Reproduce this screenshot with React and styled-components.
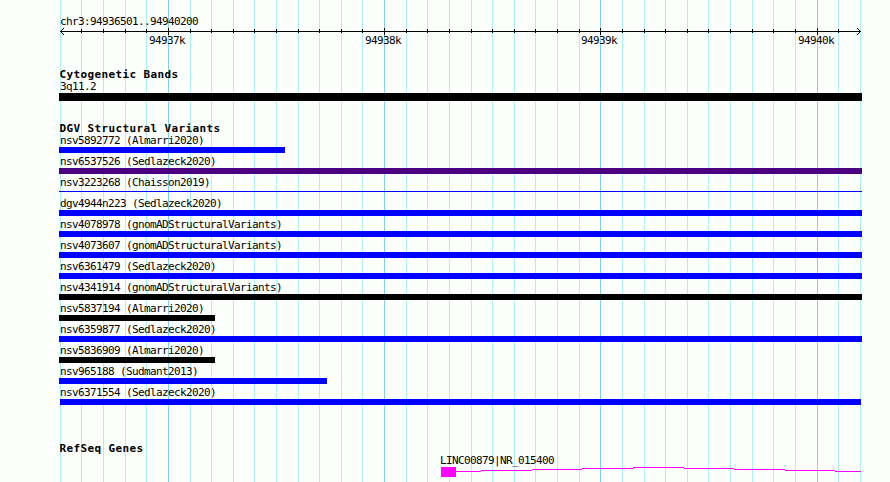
import React from 'react';
import styled, { createGlobalStyle } from 'styled-components';

const START = 94936501;
const SCALE = 800 / 3700;

const toX = (pos) => Math.round((pos - START) * SCALE);

// one line every 100 bases, a darker one every 1000
const lines = Array.from({ length: 38 }, (_, i) => {
  const pos = 94936500 + i * 100;
  return { x: i === 0 ? 0 : toX(pos), major: pos % 1000 === 0, pos };
});

const variants = [
  { name: 'nsv5892772 (Almarri2020)', width: 226 },
  { name: 'nsv6537526 (Sedlazeck2020)', color: '#4b0082' },
  { name: 'nsv3223268 (Chaisson2019)', thin: true },
  { name: 'dgv4944n223 (Sedlazeck2020)' },
  { name: 'nsv4078978 (gnomADStructuralVariants)' },
  { name: 'nsv4073607 (gnomADStructuralVariants)' },
  { name: 'nsv6361479 (Sedlazeck2020)' },
  { name: 'nsv4341914 (gnomADStructuralVariants)', color: '#000' },
  { name: 'nsv5837194 (Almarri2020)', color: '#000', width: 156 },
  { name: 'nsv6359877 (Sedlazeck2020)' },
  { name: 'nsv5836909 (Almarri2020)', color: '#000', width: 156 },
  { name: 'nsv965188 (Sudmant2013)', width: 268 },
  { name: 'nsv6371554 (Sedlazeck2020)', width: 801, offset: 1 },
];

const Ruler = () => (
  <RulerSvg viewBox="0 0 803 9">
    <rect x="1" y="4" width="801" height="1" />
    {lines.slice(1, -1).map(({ x, major }) => (
      <rect key={x} x={x + 1} y={major ? 1 : 2} width="1" height={major ? 7 : 4} />
    ))}
    <path d="M4 1h1v1h-1zM3 2h1v1h-1zM2 3h1v1h-1zM2 5h1v1h-1zM3 6h1v1h-1zM4 7h1v1h-1z" />
    <path d="M798 1h1v1h-1zM799 2h1v1h-1zM800 3h1v1h-1zM800 5h1v1h-1zM799 6h1v1h-1zM798 7h1v1h-1z" />
  </RulerSvg>
);

const Gene = () => (
  <GeneSvg viewBox="0 0 420 12">
    <rect x="0" y="1" width="15" height="10" />
    <rect x="15" y="5" width="25" height="1" />
    <rect x="40" y="4" width="51" height="1" />
    <rect x="91" y="3" width="50" height="1" />
    <rect x="141" y="2" width="51" height="1" />
    <rect x="192" y="1" width="51" height="1" />
    <rect x="243" y="2" width="50" height="1" />
    <rect x="293" y="3" width="51" height="1" />
    <rect x="344" y="4" width="50" height="1" />
    <rect x="394" y="5" width="26" height="1" />
  </GeneSvg>
);

const App = () => (
  <>
    <GlobalStyle />
    <Browser>
      <Grid>
        {lines.map(({ x, major }) => (
          <GridLine key={x} $major={major} style={{ left: x + 1 }} />
        ))}
      </Grid>
      <Header>
        <Label>chr3:94936501..94940200</Label>
        <Ruler />
        <Scale>
          {lines.filter((line) => line.major).map(({ x, pos }) => (
            <ScaleLabel key={pos} style={{ left: x - 19 }}>{pos / 1000}k</ScaleLabel>
          ))}
        </Scale>
      </Header>
      <Track $height={54}>
        <Title>Cytogenetic Bands</Title>
        <Label>3q11.2</Label>
        <Band />
      </Track>
      <Track $height={320}>
        <Title>DGV Structural Variants</Title>
        {variants.map(({ name, ...bar }) => (
          <Variant key={name}>
            <Label>{name}</Label>
            <Bar $color={bar.color} $width={bar.width} $offset={bar.offset} $thin={bar.thin} />
          </Variant>
        ))}
      </Track>
      <Track $height={40}>
        <Title>RefSeq Genes</Title>
        <GeneRow>
          <Label>LINC00879|NR_015400</Label>
          <Gene />
        </GeneRow>
      </Track>
    </Browser>
  </>
);
export default App;

const GlobalStyle = createGlobalStyle`
  body {
    margin: 0;
    background: #fdfffc;
  }
`

const Browser = styled.div`
  position: relative;
  box-sizing: border-box;
  width: 890px;
  height: 482px;
  padding-left: 59px;
  overflow: hidden;
  color: #000;
  background: #fdfffc;
`

const Grid = styled.div`
  position: absolute;
  top: 0;
  bottom: 0;
  left: 59px;
  width: 803px;
`

const GridLine = styled.div`
  position: absolute;
  top: 0;
  bottom: 0;
  width: 1px;
  background: ${props => props.$major ? '#87ceeb' : '#afeeee'};
`

const Header = styled.div`
  position: relative;
  box-sizing: border-box;
  width: 803px;
  height: 68px;
  padding-top: 15px;
`

const Label = styled.div`
  height: 12px;
  padding-left: 1px;
  font: 11px/14px "DejaVu Sans Mono", monospace;
  letter-spacing: -0.62px;
  white-space: pre;
`

const Title = styled.div`
  height: 12px;
  padding-left: 0.5px;
  font: bold 11px/14px "DejaVu Sans Mono", monospace;
  letter-spacing: 0.38px;
  white-space: pre;
`

const RulerSvg = styled.svg`
  display: block;
  width: 803px;
  height: 9px;
  shape-rendering: crispEdges;
`

const Scale = styled.div`
  position: relative;
  height: 12px;
  margin-top: -2px;
`

const ScaleLabel = styled(Label)`
  position: absolute;
  top: 0;
`

const Track = styled.section`
  position: relative;
  width: 803px;
  height: ${props => props.$height}px;
`

const Band = styled.div`
  height: 8px;
  margin-top: 1px;
  background: #000;
`

const Variant = styled.div`
  height: 21px;
`

const Bar = styled.div`
  width: ${props => props.$width || 803}px;
  height: ${props => props.$thin ? 1 : 6}px;
  margin-top: ${props => props.$thin ? 3 : 1}px;
  margin-left: ${props => props.$offset || 0}px;
  background: ${props => props.$color || '#00f'};
`

const GeneRow = styled.div`
  padding-left: 380px;
`

const GeneSvg = styled.svg`
  display: block;
  width: 420px;
  height: 12px;
  margin-left: 2px;
  fill: #f0f;
  shape-rendering: crispEdges;
`
